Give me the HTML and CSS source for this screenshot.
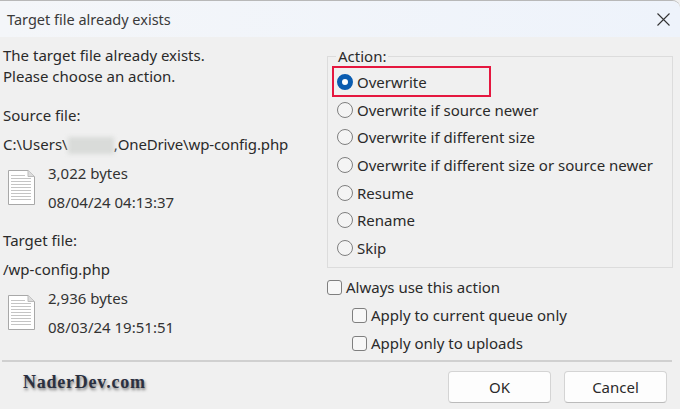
FILE: index.html
```html
<!DOCTYPE html>
<html lang="en">
<head>
<meta charset="utf-8">
<title>Target file already exists</title>
<link rel="stylesheet" href="styles.css">
</head>
<body>
<div class="dialog">
  <header class="titlebar">
    <span class="title">Target file already exists</span>
    <svg class="close" width="13" height="13" viewBox="0 0 13 13"><path d="M.5.5l12 12M12.5.5l-12 12" stroke="#333" stroke-width="1.1" fill="none"/></svg>
  </header>
  <main class="content">
    <section class="left">
      <p class="intro">The target file already exists.<br>Please choose an action.</p>
      <div class="label source-label">Source file:</div>
      <div class="path">C:\Users\<span class="blur"></span>,<span class="tail">OneDrive\wp-config.php</span></div>
      <div class="file">
        <svg class="doc" width="27" height="35" viewBox="0 0 27 35"><path d="M.5.5H20L26.500 6.500V34.500H.5Z" fill="#fff" stroke="#a8a8a8"/><path d="M20 .5V6.500H26.500" fill="#dcdcdc" stroke="#bbb"/><path d="M3 5.500H17M3 8.500H23M3 11.500H23M3 14.500H23M3 17.500H23M3 20.500H23M3 23.500H23M3 26.500H23M3 29.500H23" stroke="#c4c4c4"/></svg>
        <div class="meta"><div>3,022 bytes</div><div>08/04/24 04:13:37</div></div>
      </div>
      <div class="label target-label">Target file:</div>
      <div class="path">/wp-config.php</div>
      <div class="file">
        <svg class="doc" width="27" height="35" viewBox="0 0 27 35"><path d="M.5.5H20L26.500 6.500V34.500H.5Z" fill="#fff" stroke="#a8a8a8"/><path d="M20 .5V6.500H26.500" fill="#dcdcdc" stroke="#bbb"/><path d="M3 5.500H17M3 8.500H23M3 11.500H23M3 14.500H23M3 17.500H23M3 20.500H23M3 23.500H23M3 26.500H23M3 29.500H23" stroke="#c4c4c4"/></svg>
        <div class="meta"><div>2,936 bytes</div><div>08/03/24 19:51:51</div></div>
      </div>
    </section>
    <section class="right">
      <fieldset class="actions">
        <legend>Action:</legend>
        <label class="radio-row highlighted"><span class="radio checked"></span>Overwrite</label>
        <label class="radio-row"><span class="radio"></span>Overwrite if source newer</label>
        <label class="radio-row"><span class="radio"></span>Overwrite if different size</label>
        <label class="radio-row"><span class="radio"></span>Overwrite if different size or source newer</label>
        <label class="radio-row"><span class="radio"></span>Resume</label>
        <label class="radio-row"><span class="radio"></span>Rename</label>
        <label class="radio-row"><span class="radio"></span>Skip</label>
      </fieldset>
      <label class="check-row first"><span class="check"></span>Always use this action</label>
      <label class="check-row sub"><span class="check"></span>Apply to current queue only</label>
      <label class="check-row sub"><span class="check"></span>Apply only to uploads</label>
    </section>
  </main>
  <hr class="sep">
  <footer class="footer">
    <span class="brand">NaderDev.com</span>
    <div class="buttons"><button class="btn">OK</button><button class="btn">Cancel</button></div>
  </footer>
</div>
</body>
</html>
```

FILE: styles.css
```css
* { box-sizing: border-box; }
html, body { margin: 0; padding: 0; }
body { width: 680px; height: 409px; overflow: hidden; background: #f0f0f0; font-family: "Noto Sans", sans-serif; font-size: 15px; color: #2a2a2a; }
.dialog { width: 680px; height: 409px; display: flex; flex-direction: column; background: #f0f0f0; border-top: 1px solid #b8b8b8; border-top-right-radius: 8px; overflow: hidden; }
.titlebar { height: 36px; flex: none; display: flex; align-items: center; justify-content: space-between; padding: 0 10px 0 7px; background: linear-gradient(90deg, #f4f6f9, #eef3fb); }
.title { color: #3a3a3a; font-size: 14.500px; }
.close { display: block; }
.content { flex: none; height: 323px; display: flex; }
.left { width: 326px; padding: 8px 0 0 3px; }
.intro { margin: 0; line-height: 21px; }
.label { line-height: 20px; }
.source-label { margin-top: 18px; }
.target-label { margin-top: 7px; }
.path { margin-top: 9px; line-height: 20px; white-space: nowrap; }
.tail { letter-spacing: -.14px; }
.blur { display: inline-block; width: 46px; height: 17px; vertical-align: -4px; background: #d9dbd9; filter: blur(2px); }
.file { display: flex; margin-top: 9px; height: 60px; }
.doc { margin: 7px 0 0 5px; flex: none; }
.meta { margin-left: 13px; line-height: 20px; display: flex; flex-direction: column; gap: 9px; color: #333; }
.right { width: 354px; }
.actions { width: 346px; height: 221px; margin: 10px 0 0 1px; padding: 2px 0 0 9px; border: 1px solid #dcdcdc; }
legend { padding: 0 2px; margin-left: -1px; line-height: 18px; }
.radio-row { display: flex; align-items: center; height: 27.700px; gap: 4px; white-space: nowrap; }
.radio { width: 16px; height: 16px; border-radius: 50%; border: 1px solid #7f7f7f; background: #f4f4f4; flex: none; }
.radio.checked { border: 5px solid #0a5cb0; background: #fff; }
.highlighted { outline: 2px solid #e5173f; outline-offset: -2px; width: 159px; height: 31px; margin: -1px 0 -1.350px -5px; padding-left: 5px; }
.check-row { display: flex; align-items: center; height: 28px; gap: 4px; margin-left: 1px; white-space: nowrap; }
.first { margin-top: 5px; }
.check { width: 15px; height: 15px; border-radius: 3px; border: 1px solid #7f7f7f; background: #f7f7f7; flex: none; }
.sub { margin-left: 26px; }
.sep { flex: none; width: 670px; height: 2px; margin: 0 0 0 2px; border: 0; background: #d0d0d0; }
.footer { flex: 1; display: flex; justify-content: space-between; padding: 9px 13px 0 23px; }
.brand { font-family: "Liberation Serif", serif; font-weight: bold; font-size: 18px; letter-spacing: .77px; color: #2b3040; text-shadow: 1px 2px 3px #777; line-height: 22px; }
.buttons { display: flex; gap: 13px; }
.btn { width: 103px; height: 32px; background: #fdfdfd; border: 1px solid #d4d4d4; border-bottom-color: #bbb; border-radius: 4px; font: inherit; color: #2a2a2a; padding: 0; }
```
